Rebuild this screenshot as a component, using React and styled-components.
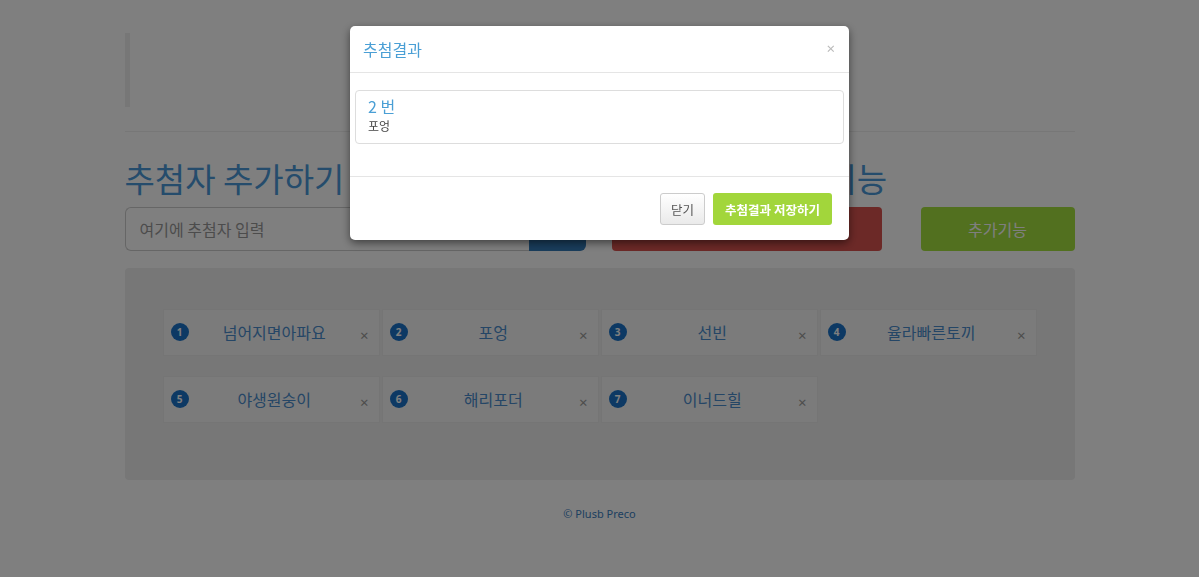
import React from "react";
import styled, { createGlobalStyle } from "styled-components";

const GlobalStyle = createGlobalStyle`
    html, body {
        margin : 0;
        padding : 0;
        background : #ffffff;
        font-family : "Noto Sans", "Noto Sans CJK KR", sans-serif;
    }
`

const Container = styled.div`
    width : 950px;
    margin : 0 auto;
    padding-top : 33px;
`

const Quote = styled.blockquote`
    margin : 0;
    height : 74px;
    border-left : 5px solid #eeeeee;
`

const Rule = styled.hr`
    margin : 24px 0 0;
    border : 0;
    border-top : 1px solid #eeeeee;
`

const HeadRow = styled.div`
    display : flex;
    margin-top : 23px;
    & h1 {
        margin : 0;
        font-family : "Noto Sans CJK KR", sans-serif;
        font-size : 33px;
        font-weight : 400;
        line-height : 46px;
        color : #4a98d8;
        white-space : nowrap;
    }
`

const HeadCol = styled.div`
    width : ${(p) => p.width}px;
`

const Controls = styled.div`
    display : flex;
    height : 44px;
    margin-top : 6px;
`

const InputGroup = styled.div`
    display : flex;
    width : 461px;
    margin-right : 26px;
    & input {
        flex : 1;
        border : 1px solid #cccccc;
        border-right : 0;
        border-radius : 6px 0 0 6px;
        padding : 0 14px;
        font-family : "Noto Sans CJK KR", sans-serif;
        font-size : 16px;
        color : #555;
        outline : none;
        background : #fff;
    }
    & input::placeholder {
        color : #999;
    }
`

const AddButton = styled.button`
    width : 57px;
    border : 0;
    border-radius : 0 6px 6px 0;
    background : #337ab7;
`

const ActionButton = styled.button`
    width : ${(p) => p.width}px;
    margin-right : ${(p) => p.gap || 0}px;
    border : 0;
    border-radius : 4px;
    background : ${(p) => p.bg};
    color : #fff;
    font-family : "Noto Sans CJK KR", sans-serif;
    font-size : 16px;
`

const Panel = styled.div`
    margin-top : 17px;
    height : 212px;
    box-sizing : border-box;
    padding : 41px 38px 0;
    background : #eeeeee;
    border-radius : 4px;
`

const CardGrid = styled.div`
    display : grid;
    grid-template-columns : repeat(4, 217px);
    column-gap : 2px;
    row-gap : 20px;
`

const Card = styled.div`
    display : flex;
    align-items : center;
    height : 47px;
    box-sizing : border-box;
    padding : 0 8px 2px 7px;
    background : #f6f6f6;
    border : 1px solid #ebebeb;
`

const Badge = styled.span`
    width : 18px;
    height : 18px;
    border-radius : 50%;
    background : #1a73c8;
    color : #fff;
    font-size : 10px;
    font-weight : 700;
    display : flex;
    align-items : center;
    justify-content : center;
`

const Name = styled.span`
    flex : 1;
    text-align : center;
    font-family : "Noto Sans CJK KR", sans-serif;
    font-size : 16px;
    color : #4a8ccc;
`

const Remove = styled.span`
    color : #999;
    font-size : 15px;
    margin-top : 6px;
    margin-right : 2px;
`

const Footer = styled.div`
    margin-top : 26px;
    text-align : center;
    font-size : 11px;
    color : #3a80c0;
`

const Backdrop = styled.div`
    position : fixed;
    inset : 0;
    background : rgba(0, 0, 0, 0.5);
`

const ModalWrap = styled.div`
    position : fixed;
    inset : 0;
    padding-top : 26px;
`

const Modal = styled.div`
    width : 499px;
    margin : 0 auto;
    background : #fff;
    border-radius : 5px;
    box-shadow : 0 3px 9px rgba(0, 0, 0, 0.5);
    font-family : "Noto Sans CJK KR", sans-serif;
`

const ModalHeader = styled.div`
    display : flex;
    align-items : center;
    justify-content : space-between;
    height : 46px;
    padding : 0 14px 0 13px;
    border-bottom : 1px solid #e5e5e5;
    & h4 {
        margin : 0;
        font-size : 16px;
        font-weight : 400;
        color : #4a9fd5;
    }
    & span {
        color : #bbbbbb;
        font-size : 15px;
        font-family : "Noto Sans", sans-serif;
        margin-top : -2px;
    }
`

const ModalBody = styled.div`
    padding : 17px 5px 32px;
`

const ResultItem = styled.div`
    border : 1px solid #dddddd;
    border-radius : 4px;
    padding : 4px 12px 9px;
    & strong {
        display : block;
        font-weight : 400;
        font-size : 16px;
        line-height : 22px;
        color : #4a9fd5;
    }
    & span {
        display : block;
        font-size : 12px;
        line-height : 17px;
        color : #444;
    }
`

const ModalFooter = styled.div`
    display : flex;
    justify-content : flex-end;
    gap : 8px;
    padding : 16px 17px 15px;
    border-top : 1px solid #e5e5e5;
`

const FooterButton = styled.button`
    height : 32px;
    width : ${(p) => p.width}px;
    padding : 0;
    border-radius : 3px;
    font-family : "Noto Sans CJK KR", sans-serif;
    font-size : 12.5px;
    border : ${(p) => (p.primary ? "0" : "1px solid #cccccc")};
    background : ${(p) => (p.primary ? "#a2d63b" : "linear-gradient(#ffffff, #eaeaea)")};
    color : ${(p) => (p.primary ? "#ffffff" : "#555555")};
    font-weight : ${(p) => (p.primary ? 700 : 400)};
`

const names = ["넘어지면아파요", "포엉", "선빈", "율라빠른토끼", "야생원숭이", "해리포더", "이너드힐"];

const App = () => {
    return (
        <>
            <GlobalStyle />
            <Container>
                <Quote />
                <Rule />
                <HeadRow>
                    <HeadCol width={482}><h1>추첨자 추가하기</h1></HeadCol>
                    <HeadCol width={468}><h1>추첨하기와 추가기능</h1></HeadCol>
                </HeadRow>
                <Controls>
                    <InputGroup>
                        <input placeholder="여기에 추첨자 입력" />
                        <AddButton />
                    </InputGroup>
                    <ActionButton width={270} gap={39} bg="#d9534f" />
                    <ActionButton width={154} bg="#a4e03e">추가기능</ActionButton>
                </Controls>
                <Panel>
                    <CardGrid>
                        {names.map((name, i) => (
                            <Card key={name}>
                                <Badge>{i + 1}</Badge>
                                <Name>{name}</Name>
                                <Remove>×</Remove>
                            </Card>
                        ))}
                    </CardGrid>
                </Panel>
                <Footer>© Plusb Preco</Footer>
            </Container>
            <Backdrop />
            <ModalWrap>
                <Modal>
                    <ModalHeader>
                        <h4>추첨결과</h4>
                        <span>×</span>
                    </ModalHeader>
                    <ModalBody>
                        <ResultItem>
                            <strong>2 번</strong>
                            <span>포엉</span>
                        </ResultItem>
                    </ModalBody>
                    <ModalFooter>
                        <FooterButton width={45}>닫기</FooterButton>
                        <FooterButton width={119} primary>추첨결과 저장하기</FooterButton>
                    </ModalFooter>
                </Modal>
            </ModalWrap>
        </>
    );
};

export default App;
